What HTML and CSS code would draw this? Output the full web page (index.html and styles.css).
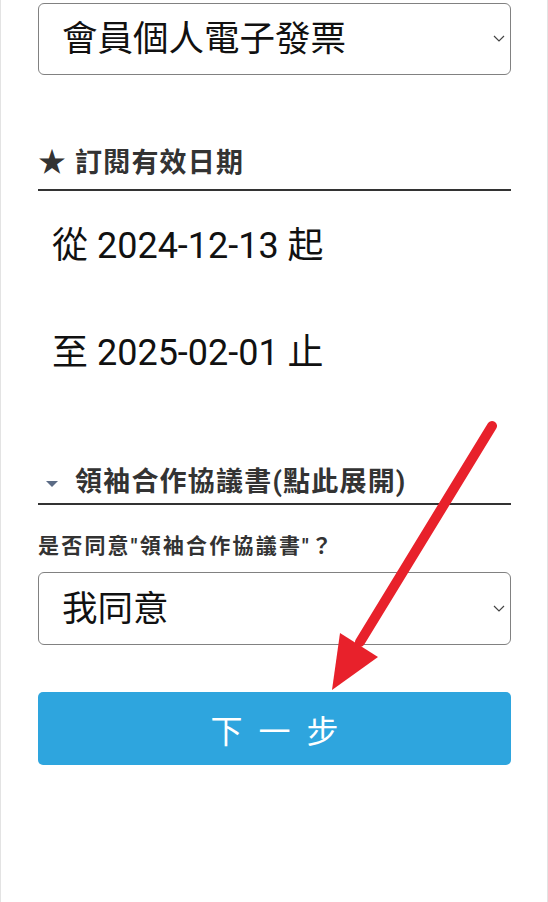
FILE: index.html
```html
<!DOCTYPE html>
<html lang="zh-Hant">
<head>
  <meta charset="UTF-8" />
  <meta name="viewport" content="width=device-width, initial-scale=1.0" />
  <title>訂閱確認</title>
  <link rel="stylesheet" href="styles.css">
</head>
<body>
  <div class="page">
    <div class="field">
      <select id="invoiceType">
        <option>會員個人電子發票</option>
        <option>捐贈發票</option>
        <option>公司統編發票</option>
      </select>
      <svg class="chevron" viewBox="0 0 12 8"><polyline points="1,1 6,6 11,1" /></svg>
    </div>

    <h3 class="title"><span class="star">★</span>訂閱有效日期</h3>
    <p class="date">從 2024-12-13 起</p>
    <p class="date second">至 2025-02-01 止</p>

    <h3 class="title toggle"><span class="tri"></span>領袖合作協議書(點此展開)</h3>

    <div class="ask">是否同意"領袖合作協議書"？</div>
    <div class="field agree">
      <select id="agree">
        <option>我同意</option>
        <option>不同意</option>
      </select>
      <svg class="chevron" viewBox="0 0 12 8"><polyline points="1,1 6,6 11,1" /></svg>
    </div>

    <button class="next">下 一 步</button>

    <!-- red pointer arrow drawn over the form -->
    <svg class="arrow" viewBox="0 0 548 902">
      <line x1="492" y1="426" x2="360" y2="642" />
      <polygon points="340,633 378,657 332,690" />
    </svg>
  </div>
</body>
</html>
```

FILE: styles.css
```css
body {
  margin: 0;
  background: #fff;
  color: #111;
  font-family: Roboto, "Noto Sans CJK TC", sans-serif;
}
.page {
  position: relative;
  width: 548px;
  min-height: 902px;
  box-sizing: border-box;
  border-left: 1px solid #e3e3e3;
  border-right: 1px solid #e3e3e3;
  padding: 3px 36px 0 37px;
}
.field { position: relative; }
select {
  appearance: none;
  -webkit-appearance: none;
  display: block;
  width: 100%;
  height: 72px;
  box-sizing: border-box;
  border: 1.5px solid #818181;
  border-radius: 6px;
  background: #fff;
  color: #111;
  padding: 0 0 0 23px;
  font-family: Roboto, "Noto Sans CJK TC", sans-serif;
  font-size: 35.5px;
}
.chevron {
  position: absolute;
  right: 6px;
  top: 32px;
  width: 12px;
  height: 8px;
  fill: none;
  stroke: #444;
  stroke-width: 1.2;
}
.title {
  margin: 68px 0 0;
  padding-bottom: 6px;
  border-bottom: 2px solid #333;
  color: #333;
  font-size: 27px;
  font-weight: 700;
  line-height: 40px;
  letter-spacing: 1.2px;
}
.star {
  margin-right: 9px;
  font-family: "Noto Sans CJK TC", sans-serif;
  font-size: 28px;
  line-height: 1;
  letter-spacing: 0;
}
.date {
  margin: 35px 0 0 14px;
  font-size: 36px;
  line-height: 40px;
}
.date.second { margin-top: 67px; }
.title.toggle {
  margin-top: 89px;
  padding-bottom: 1px;
}
.tri {
  display: inline-block;
  vertical-align: middle;
  width: 0;
  height: 0;
  margin: 0 17px 0 8px;
  border-left: 6px solid transparent;
  border-right: 6px solid transparent;
  border-top: 6px solid #5b6b85;
}
.ask {
  margin-top: 26px;
  color: #333;
  font-size: 21px;
  font-weight: 700;
  line-height: 30px;
  letter-spacing: 2.2px;
}
.agree { margin-top: 11px; }
.agree select { height: 73px; }
.agree .chevron { top: 33px; }
.next {
  display: block;
  width: 100%;
  height: 73px;
  margin-top: 47px;
  padding: 0 0 0 4px;
  border: none;
  border-radius: 5px;
  background: #2ea5de;
  color: #fff;
  font-family: Roboto, "Noto Sans CJK TC", sans-serif;
  font-size: 32px;
  letter-spacing: 4px;
  cursor: pointer;
}
.arrow {
  position: absolute;
  left: -1px;
  top: 0;
  width: 548px;
  height: 902px;
  pointer-events: none;
}
.arrow line {
  stroke: #e8212b;
  stroke-width: 10;
  stroke-linecap: round;
}
.arrow polygon { fill: #e8212b; }
```
